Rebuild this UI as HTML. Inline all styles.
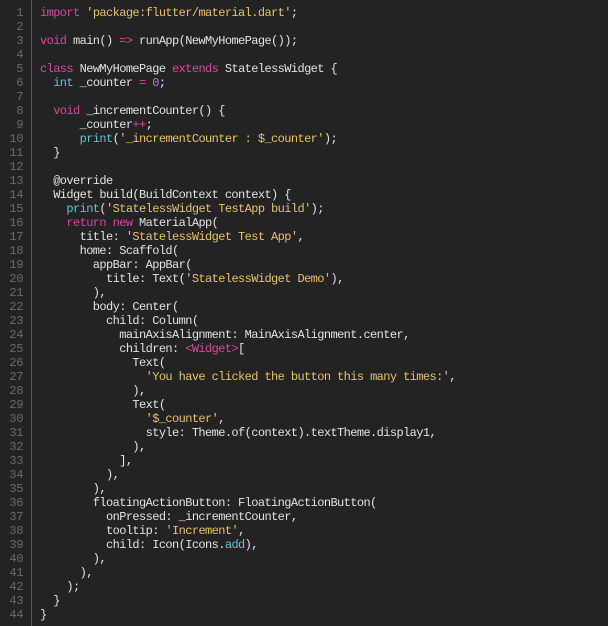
<!DOCTYPE html>
<html><head><meta charset="utf-8"><style>
html,body{margin:0;padding:0;background:#232323;width:608px;height:626px;overflow:hidden}
.g{position:absolute;left:0;top:6px;width:23px;text-align:right;font:12px/14px "Liberation Mono",monospace;letter-spacing:-0.4px;color:#6a6a6a;white-space:pre}
.d{position:absolute;left:31px;top:0;width:1px;height:626px;background:#5a5a5a}
.c{position:absolute;left:40px;top:6px;font:12px/14px "Liberation Mono",monospace;letter-spacing:-0.6px;color:#e2e2e2;white-space:pre}
.k{color:#d9489f}.s{color:#e6c36a}.t{color:#5fc6d6}.n{color:#b57fe0}
</style></head><body>
<div class="g">1
2
3
4
5
6
7
8
9
10
11
12
13
14
15
16
17
18
19
20
21
22
23
24
25
26
27
28
29
30
31
32
33
34
35
36
37
38
39
40
41
42
43
44</div>
<div class="d"></div>
<div class="c"><span class="k">import</span> <span class="s">'package:flutter/material.dart'</span>;

<span class="k">void</span> main() <span class="k">=&gt;</span> runApp(NewMyHomePage());

<span class="k">class</span> NewMyHomePage <span class="k">extends</span> StatelessWidget {
  <span class="t">int</span> _counter <span class="k">=</span> <span class="n">0</span>;

  <span class="k">void</span> _incrementCounter() {
      _counter<span class="k">++</span>;
      <span class="t">print</span>(<span class="s">'_incrementCounter : $_counter'</span>);
  }

  @override
  Widget build(BuildContext context) {
    <span class="t">print</span>(<span class="s">'StatelessWidget TestApp build'</span>);
    <span class="k">return</span> <span class="k">new</span> MaterialApp(
      title: <span class="s">'StatelessWidget Test App'</span>,
      home: Scaffold(
        appBar: AppBar(
          title: Text(<span class="s">'StatelessWidget Demo'</span>),
        ),
        body: Center(
          child: Column(
            mainAxisAlignment: MainAxisAlignment.center,
            children: <span class="k">&lt;Widget&gt;</span>[
              Text(
                <span class="s">'You have clicked the button this many times:'</span>,
              ),
              Text(
                <span class="s">'$_counter'</span>,
                style: Theme.of(context).textTheme.display1,
              ),
            ],
          ),
        ),
        floatingActionButton: FloatingActionButton(
          onPressed: _incrementCounter,
          tooltip: <span class="s">'Increment'</span>,
          child: Icon(Icons.<span class="t">add</span>),
        ),
      ),
    );
  }
}</div>
</body></html>
